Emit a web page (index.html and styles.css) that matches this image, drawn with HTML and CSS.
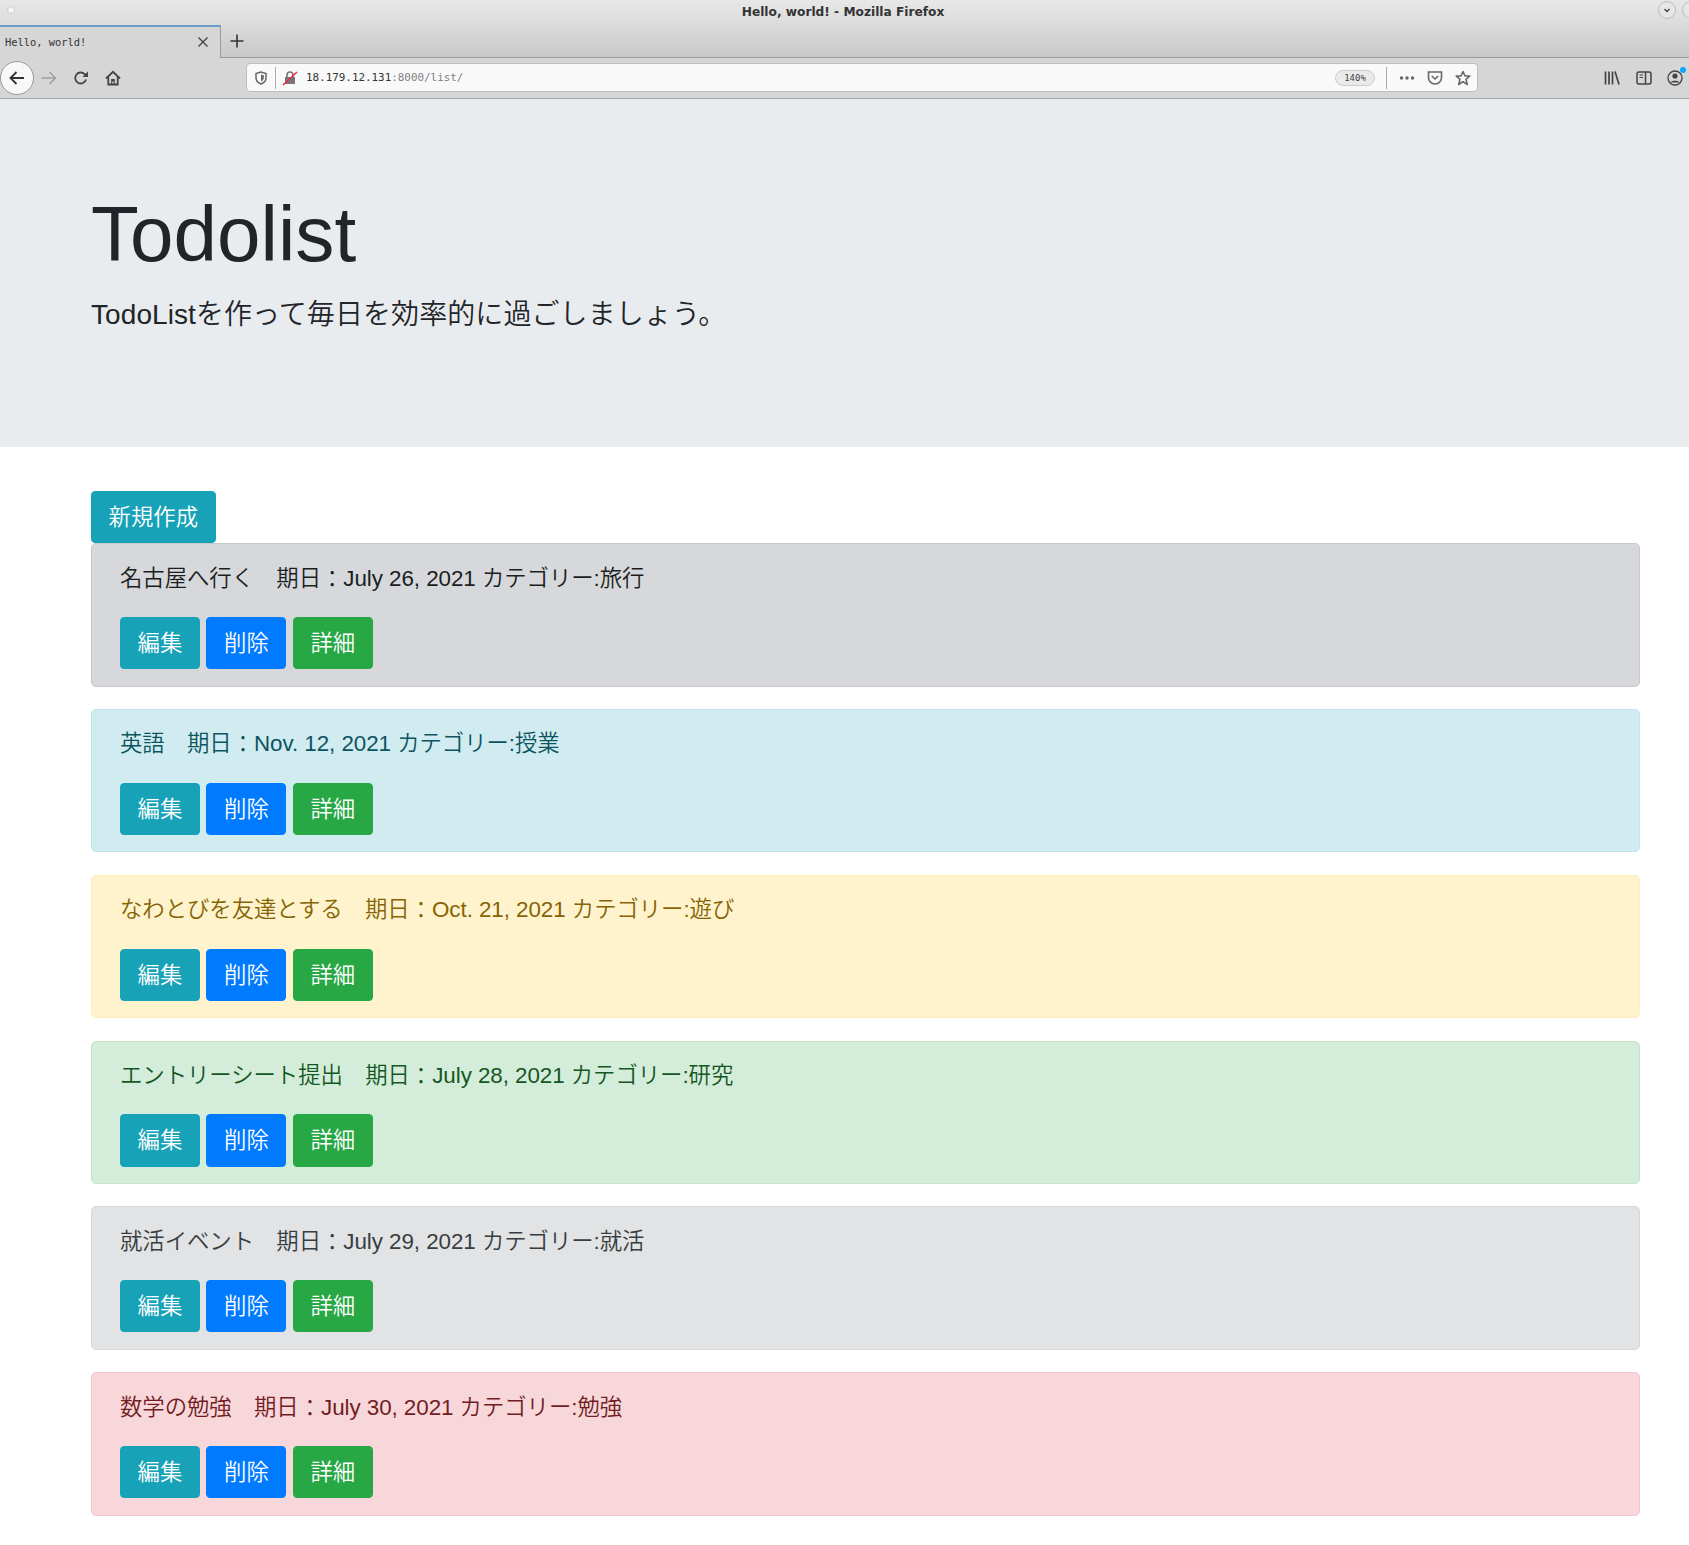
FILE: index.html
```html
<!DOCTYPE html>
<html lang="ja">
<head>
<meta charset="utf-8">
<title>Hello, world!</title>
<link rel="stylesheet" href="styles.css">
</head>
<body>
<div class="browser">
  <div class="titlebar">
    <span class="win-dot"></span>
    <span class="win-title">Hello, world! - Mozilla Firefox</span>
    <span class="win-btns">
      <span class="win-btn"><svg width="10" height="10" viewBox="0 0 10 10"><path d="M2.500 4 5 6.500 7.500 4" fill="none" stroke="#444" stroke-width="1.300"/></svg></span>
      <span class="win-btn"></span>
    </span>
  </div>
  <div class="tabbar">
    <div class="tab">
      <span class="tab-title">Hello, world!</span>
      <svg class="tab-close" width="12" height="12" viewBox="0 0 12 12"><path d="M1.500 1.500 10.500 10.500M10.500 1.500 1.500 10.500" stroke="#444" stroke-width="1.400"/></svg>
    </div>
    <svg class="new-tab" width="16" height="16" viewBox="0 0 16 16"><path d="M8 1.500V14.500M1.500 8H14.500" stroke="#333" stroke-width="1.600"/></svg>
  </div>
  <div class="navbar">
    <span class="back"><svg width="18" height="18" viewBox="0 0 18 18"><path d="M16 9H2.500M8.500 3 2.500 9 8.500 15" fill="none" stroke="#333" stroke-width="1.800"/></svg></span>
    <svg class="nav-icon" width="18" height="18" viewBox="0 0 18 18"><path d="M1.500 9H15M9.500 3 15.500 9 9.500 15" fill="none" stroke="#a0a0a0" stroke-width="1.600"/></svg>
    <svg class="nav-icon reload" width="16" height="16" viewBox="0 0 16 16"><path d="M13 9.500A5.500 5.500 0 1 1 11.500 4L14 6" fill="none" stroke="#444" stroke-width="1.800"/><path d="M15 1.500V7H9.500Z" fill="#444"/></svg>
    <svg class="nav-icon home" width="16" height="16" viewBox="0 0 16 16"><path d="M1 8.500 8 1.800 15 8.500" fill="none" stroke="#444" stroke-width="1.800"/><path d="M3.300 7V14.500H12.700V7" fill="none" stroke="#444" stroke-width="1.800"/><rect x="6.200" y="9" width="3.600" height="5.500" fill="#444"/><circle cx="8" cy="12.500" r="0.900" fill="#ddd"/></svg>
    <div class="urlbar">
      <svg class="shield" width="14" height="14" viewBox="0 0 14 14"><path d="M7 1 2 2.500V7C2 10 4.500 12 7 13 9.500 12 12 10 12 7V2.500Z" fill="none" stroke="#666" stroke-width="1.500"/><path d="M7 3.500 9.800 4.300V7C9.800 8.500 8.500 9.800 7 10.500Z" fill="#666"/></svg>
      <span class="url-sep"></span>
      <svg class="lock" width="16" height="16" viewBox="0 0 16 16"><path d="M5 7V5A3 3 0 0 1 11 5V7" fill="none" stroke="#777" stroke-width="1.600"/><rect x="3" y="7" width="10" height="7" fill="#777"/><path d="M1 15 15 2" stroke="#ee2a4c" stroke-width="1.500"/></svg>
      <span class="url-text">18.179.12.131<span class="url-dim">:8000/list/</span></span>
      <span class="zoom-pill">140%</span>
      <span class="url-sep sep-right"></span>
      <svg class="url-icon" width="16" height="16" viewBox="0 0 16 16"><circle cx="2.500" cy="8" r="1.700" fill="#666"/><circle cx="8" cy="8" r="1.700" fill="#666"/><circle cx="13.500" cy="8" r="1.700" fill="#666"/></svg>
      <svg class="url-icon" width="16" height="16" viewBox="0 0 16 16"><path d="M1.500 2H14.500V7.500A6.500 6.500 0 0 1 1.500 7.500Z" fill="none" stroke="#666" stroke-width="1.600"/><path d="M4.800 6 8 9 11.200 6" fill="none" stroke="#666" stroke-width="1.600"/></svg>
      <svg class="url-icon" width="16" height="16" viewBox="0 0 16 16"><path d="M8 1.500 10 6H14.800L11 9.300 12.300 14.500 8 11.700 3.700 14.500 5 9.300 1.200 6H6Z" fill="none" stroke="#666" stroke-width="1.600" stroke-linejoin="round"/></svg>
    </div>
    <div class="tools">
      <svg width="16" height="16" viewBox="0 0 16 16"><path d="M1.500 1.500V14.500M5 1.500V14.500M8.500 1.500V14.500M11 1.500 15 14.500" stroke="#444" stroke-width="1.700" fill="none"/></svg>
      <svg width="16" height="16" viewBox="0 0 16 16"><rect x="1" y="2" width="14" height="12" rx="2" fill="none" stroke="#444" stroke-width="1.500"/><path d="M9.500 2V14" stroke="#444" stroke-width="1.500"/><path d="M3.500 5H7M3.500 7.500H7" stroke="#444"/></svg>
      <span class="account">
        <svg width="16" height="16" viewBox="0 0 16 16"><circle cx="8" cy="8" r="7" fill="none" stroke="#444" stroke-width="1.300"/><circle cx="8" cy="6" r="2.600" fill="#444"/><path d="M3.500 12.500C4 10 12 10 12.500 12.500Z" fill="#444"/></svg>
        <span class="account-dot"></span>
      </span>
    </div>
  </div>
</div>

<div class="jumbotron">
  <h1>Todolist</h1>
  <p class="lead">TodoListを作って毎日を効率的に過ごしましょう。</p>
</div>

<div class="container">
  <a class="btn btn-info" href="#">新規作成</a>

  <div class="alert alert-secondary">
    <p>名古屋へ行く　期日<span class="colon">：</span>July 26, 2021 カテゴリー:旅行</p>
    <a class="btn btn-info" href="#">編集</a>
    <a class="btn btn-primary" href="#">削除</a>
    <a class="btn btn-success" href="#">詳細</a>
  </div>

  <div class="alert alert-teal">
    <p>英語　期日<span class="colon">：</span>Nov. 12, 2021 カテゴリー:授業</p>
    <a class="btn btn-info" href="#">編集</a>
    <a class="btn btn-primary" href="#">削除</a>
    <a class="btn btn-success" href="#">詳細</a>
  </div>

  <div class="alert alert-warning">
    <p>なわとびを友達とする　期日<span class="colon">：</span>Oct. 21, 2021 カテゴリー:遊び</p>
    <a class="btn btn-info" href="#">編集</a>
    <a class="btn btn-primary" href="#">削除</a>
    <a class="btn btn-success" href="#">詳細</a>
  </div>

  <div class="alert alert-success">
    <p>エントリーシート提出　期日<span class="colon">：</span>July 28, 2021 カテゴリー:研究</p>
    <a class="btn btn-info" href="#">編集</a>
    <a class="btn btn-primary" href="#">削除</a>
    <a class="btn btn-success" href="#">詳細</a>
  </div>

  <div class="alert alert-light">
    <p>就活イベント　期日<span class="colon">：</span>July 29, 2021 カテゴリー:就活</p>
    <a class="btn btn-info" href="#">編集</a>
    <a class="btn btn-primary" href="#">削除</a>
    <a class="btn btn-success" href="#">詳細</a>
  </div>

  <div class="alert alert-danger">
    <p>数学の勉強　期日<span class="colon">：</span>July 30, 2021 カテゴリー:勉強</p>
    <a class="btn btn-info" href="#">編集</a>
    <a class="btn btn-primary" href="#">削除</a>
    <a class="btn btn-success" href="#">詳細</a>
  </div>
</div>
</body>
</html>
```

FILE: styles.css
```css
html, body {
  margin: 0;
  padding: 0;
}

body {
  font-family: "Liberation Sans", "Noto Sans CJK JP", sans-serif;
  font-size: 22.4px;
  font-weight: 350;
  line-height: 1.5;
  color: #212529;
  background-color: #fff;
  overflow: hidden;
}

/* Browser window */
.browser {
  height: 99px;
  background-color: #d6d6d6;
  font-size: 12px;
  line-height: 1;
  color: #333;
}

.titlebar {
  height: 25px;
  display: flex;
  align-items: center;
  justify-content: center;
  position: relative;
  background: linear-gradient(#e8e8e8, #dbdbdb);
}

.win-dot {
  position: absolute;
  left: 7px;
  top: 6px;
  width: 6px;
  height: 6px;
  border-radius: 50%;
  background-color: #f4f4f4;
  border: 1px solid #ccc;
}

.win-title {
  font-family: "DejaVu Sans", sans-serif;
  font-size: 12.2px;
  font-weight: bold;
  color: #333;
  margin: -1px 3px 0 0;
}

.win-btns {
  position: absolute;
  left: 1658px;
  top: 1px;
  display: flex;
  gap: 6px;
}

.win-btn {
  width: 16px;
  height: 16px;
  border-radius: 50%;
  border: 1px solid #bbb;
  background-color: #e6e6e6;
  display: flex;
  align-items: center;
  justify-content: center;
}

.tabbar {
  height: 33px;
  display: flex;
  align-items: center;
  box-sizing: border-box;
  border-bottom: 1px solid #9a9a9a;
  background: linear-gradient(#dbdbdb, #c8c8c8);
}

.tab {
  width: 221px;
  height: 33px;
  box-sizing: border-box;
  background-color: #d6d6d6;
  border-top: 2px solid #6a9bc9;
  border-right: 1px solid #9a9a9a;
  display: flex;
  align-items: center;
  justify-content: space-between;
  padding: 0 11px 0 5px;
}

.tab-title {
  font-family: "DejaVu Sans Mono", monospace;
  font-size: 10.4px;
  color: #333;
}

.new-tab {
  margin-left: 8px;
}

.navbar {
  height: 41px;
  box-sizing: border-box;
  border-bottom: 1px solid #a8a8a8;
  display: flex;
  align-items: center;
  position: relative;
}

.back {
  width: 32px;
  height: 32px;
  border-radius: 50%;
  border: 1px solid #999;
  background-color: #f8f8f8;
  display: flex;
  align-items: center;
  justify-content: center;
}

.nav-icon {
  margin-left: 6px;
}

.reload {
  margin-left: 15px;
}

.home {
  margin-left: 16px;
}

.urlbar {
  position: absolute;
  left: 246px;
  top: 5px;
  width: 1232px;
  height: 29px;
  box-sizing: border-box;
  background-color: #f9f9f9;
  border: 1px solid #bdbdbd;
  border-radius: 4px;
  display: flex;
  align-items: center;
  padding: 0 3px 0 7px;
}

.url-sep {
  width: 1px;
  height: 22px;
  background-color: #aaa;
  margin: 0 6px 0 7px;
}

.url-text {
  font-family: "DejaVu Sans Mono", monospace;
  font-size: 10.9px;
  color: #333;
  margin: 2px 0 0 8px;
  flex: 1;
}

.url-dim {
  color: #808080;
}

.zoom-pill {
  font-family: "DejaVu Sans Mono", monospace;
  font-size: 9px;
  color: #444;
  width: 38px;
  height: 14px;
  line-height: 14px;
  text-align: center;
  background-color: #eaeaea;
  border: 1px solid #ccc;
  border-radius: 8px;
}

.sep-right {
  margin: 0 3px 0 11px;
}

.url-icon {
  margin-left: 9px;
  margin-right: 3px;
}

.tools {
  position: absolute;
  left: 1604px;
  top: 12px;
  display: flex;
  gap: 15.5px;
}

.account {
  position: relative;
  height: 16px;
}

.account-dot {
  position: absolute;
  right: -3px;
  top: -3px;
  width: 6px;
  height: 6px;
  border-radius: 50%;
  background-color: #0aa5ff;
}

/* Page */
.jumbotron {
  height: 348px;
  box-sizing: border-box;
  padding: 89.4px 91px 0;
  background-color: #e9ecef;
}

.jumbotron h1 {
  margin: 0 0 11.6px;
  font-size: 78.2px;
  font-weight: 300;
  line-height: 1.2;
}

.lead {
  margin: 0;
  font-size: 28px;
  font-weight: 350;
  letter-spacing: 0.08px;
}

.container {
  padding: 44px 49px 0 91px;
}

.btn {
  display: inline-block;
  padding: 9px 16.6px 7.6px;
  margin-right: 0.22px;
  border: 1px solid transparent;
  border-radius: 4px;
  color: #fff;
  text-decoration: none;
}

.btn-info {
  background-color: #17a2b8;
  border-color: #17a2b8;
}

.btn-primary {
  background-color: #007bff;
  border-color: #007bff;
}

.btn-success {
  background-color: #28a745;
  border-color: #28a745;
}

.alert {
  padding: 17.4px 28px 16.4px;
  margin-bottom: 22.4px;
  border: 1px solid transparent;
  border-radius: 5px;
}

.alert p {
  margin: 0 0 21.8px;
  letter-spacing: -0.06px;
}

/* the colon sits a little lower in the screenshot */
.colon {
  line-height: 0;
  vertical-align: -1px;
}

.alert-secondary {
  color: #1b1e21;
  background-color: #d6d8db;
  border-color: #c6c8ca;
}

.alert-teal {
  color: #0c5460;
  background-color: #d1ecf1;
  border-color: #bee5eb;
}

.alert-warning {
  color: #856404;
  background-color: #fff3cd;
  border-color: #ffeeba;
}

.alert-success {
  color: #155724;
  background-color: #d4edda;
  border-color: #c3e6cb;
}

.alert-light {
  color: #383d41;
  background-color: #e2e3e5;
  border-color: #d6d8db;
}

.alert-danger {
  color: #721c24;
  background-color: #f8d7da;
  border-color: #f5c6cb;
}
```
